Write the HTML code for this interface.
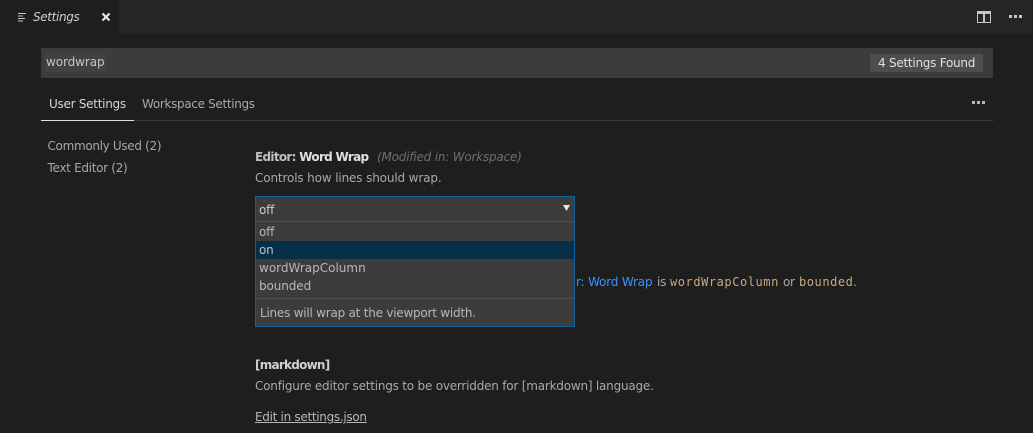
<!DOCTYPE html>
<html>
<head>
<meta charset="utf-8">
<style>
html,body{margin:0;padding:0;width:1033px;height:433px;overflow:hidden;background:#1e1e1e}
body{position:relative;font-family:"DejaVu Sans","Liberation Sans",sans-serif;font-size:12px;color:#b0b0b0}
.a{position:absolute}
.t{position:absolute;white-space:nowrap;line-height:18px;height:18px}
</style>
</head>
<body>
<div class="a" style="left:0;top:0;width:1033px;height:34px;background:#252526"></div>
<div class="a" style="left:0;top:0;width:119px;height:34px;background:#1e1e1e"></div>
<svg class="a" style="left:17px;top:12px" width="10" height="11" viewBox="0 0 10 11"><path d="M1 1.5H9M1 4H6M1 6.5H8M1 9H6" stroke="#c5c5c5" stroke-width="1" fill="none"/></svg>
<div class="t" style="left:33px;top:8px;font-style:italic;color:#d0d0d0;letter-spacing:-.35px">Settings</div>
<svg class="a" style="left:101px;top:12px" width="10" height="10" viewBox="0 0 10 10"><path d="M1.5 1.5L8.5 8.5M8.5 1.5L1.5 8.5" stroke="#e8e8e8" stroke-width="2.2" fill="none"/></svg>
<svg class="a" style="left:977px;top:11px" width="14" height="12" viewBox="0 0 14 12"><path d="M0 0H14V12H0ZM1 3V11H6V3ZM8 3V11H13V3Z" fill="#c5c5c5" fill-rule="evenodd"/></svg>
<svg class="a" style="left:1009px;top:15px" width="13" height="4" viewBox="0 0 13 4"><path d="M0 0H3V3H0ZM5 0H8V3H5ZM10 0H13V3H10Z" fill="#c5c5c5"/></svg>

<div class="a" style="left:41px;top:48px;width:952px;height:30px;background:#3c3c3c"></div>
<div class="a" style="left:45px;top:52px;width:61px;height:20px;background:#3f4143"></div>
<div class="t" style="left:46px;top:53px;color:#c4c4c4;letter-spacing:-.08px">wordwrap</div>
<div class="a" style="left:870px;top:54px;width:113px;height:18px;background:#4d4d4d;border-radius:2px"></div>
<div class="t" style="left:878px;top:54px;color:#e0e0e0;letter-spacing:-.25px">4 Settings Found</div>

<div class="t" style="left:49px;top:95px;color:#d6d6d6;letter-spacing:-.27px">User Settings</div>
<div class="t" style="left:142px;top:95px;color:#a8a8a8;letter-spacing:-.33px">Workspace Settings</div>
<div class="a" style="left:41px;top:120px;width:952px;height:1px;background:#3c3c3c"></div>
<div class="a" style="left:41px;top:120px;width:93px;height:1px;background:#e0e0e0"></div>
<svg class="a" style="left:972px;top:101px" width="13" height="4" viewBox="0 0 13 4"><path d="M0 0H3V3H0ZM5 0H8V3H5ZM10 0H13V3H10Z" fill="#b5b5b5"/></svg>

<div class="t" style="left:47.5px;top:137px;color:#a8a8a8;letter-spacing:-.32px">Commonly Used (2)</div>
<div class="t" style="left:47.5px;top:159px;color:#a8a8a8;letter-spacing:-.3px">Text Editor (2)</div>

<div class="t" style="left:255px;top:148px;font-weight:bold;color:#c0c0c0;letter-spacing:-.69px">Editor: <span style="color:#e0e0e0">Word Wrap</span></div>
<div class="t" style="left:377px;top:148px;font-style:italic;color:#6f6f6f;letter-spacing:-.2px">(Modified in: Workspace)</div>
<div class="t" style="left:255px;top:169px;color:#a8a8a8;letter-spacing:-.14px">Controls how lines should wrap.</div>

<div class="a" style="left:255px;top:196px;width:318px;height:24px;background:#3c3c3c;border:1px solid #0e639c"></div>
<div class="t" style="left:259px;top:201px;color:#d0d0d0;letter-spacing:-.2px">off</div>
<svg class="a" style="left:563px;top:205px" width="7" height="6" viewBox="0 0 7 6"><path d="M0 0H7L3.5 6Z" fill="#e8e8e8"/></svg>

<div class="a" style="left:255px;top:222px;width:318px;height:104px;background:#3c3c3c;border:1px solid #0e639c;border-top:0"></div>
<div class="a" style="left:256px;top:241px;width:318px;height:18px;background:#062f4a"></div>
<div class="t" style="left:259px;top:223px;color:#b8b8b8;letter-spacing:-.2px">off</div>
<div class="t" style="left:259px;top:241px;color:#c0c0c0;letter-spacing:-.2px">on</div>
<div class="t" style="left:259px;top:259px;color:#b8b8b8;letter-spacing:0">wordWrapColumn</div>
<div class="t" style="left:259px;top:277px;color:#b8b8b8;letter-spacing:-.1px">bounded</div>
<div class="a" style="left:256px;top:298px;width:318px;height:1px;background:#505050"></div>
<div class="t" style="left:260px;top:304px;color:#b8b8b8;letter-spacing:-.23px">Lines will wrap at the viewport width.</div>

<div class="t" style="left:576px;top:273px;color:#3794ff;letter-spacing:-.17px">r: Word Wrap</div>
<div class="t" style="left:657px;top:273px;color:#a8a8a8;letter-spacing:-.2px">is</div>
<div class="t" style="left:670px;top:273px;color:#c8a978;font-family:'DejaVu Sans Mono','Liberation Mono',monospace;letter-spacing:.55px">wordWrapColumn</div>
<div class="t" style="left:783px;top:273px;color:#a8a8a8;letter-spacing:-.3px">or</div>
<div class="t" style="left:799px;top:273px;color:#c8a978;font-family:'DejaVu Sans Mono','Liberation Mono',monospace;letter-spacing:.55px">bounded</div>
<div class="t" style="left:853px;top:273px;color:#a8a8a8">.</div>

<div class="t" style="left:255px;top:356px;font-weight:bold;color:#d0d0d0;letter-spacing:-.75px">[markdown]</div>
<div class="t" style="left:255px;top:377px;color:#a8a8a8;letter-spacing:-.21px">Configure editor settings to be overridden for [markdown] language.</div>
<div class="t" style="left:255px;top:408px;color:#b8b8b8;text-decoration:underline;letter-spacing:-.3px">Edit in settings.json</div>
</body>
</html>
